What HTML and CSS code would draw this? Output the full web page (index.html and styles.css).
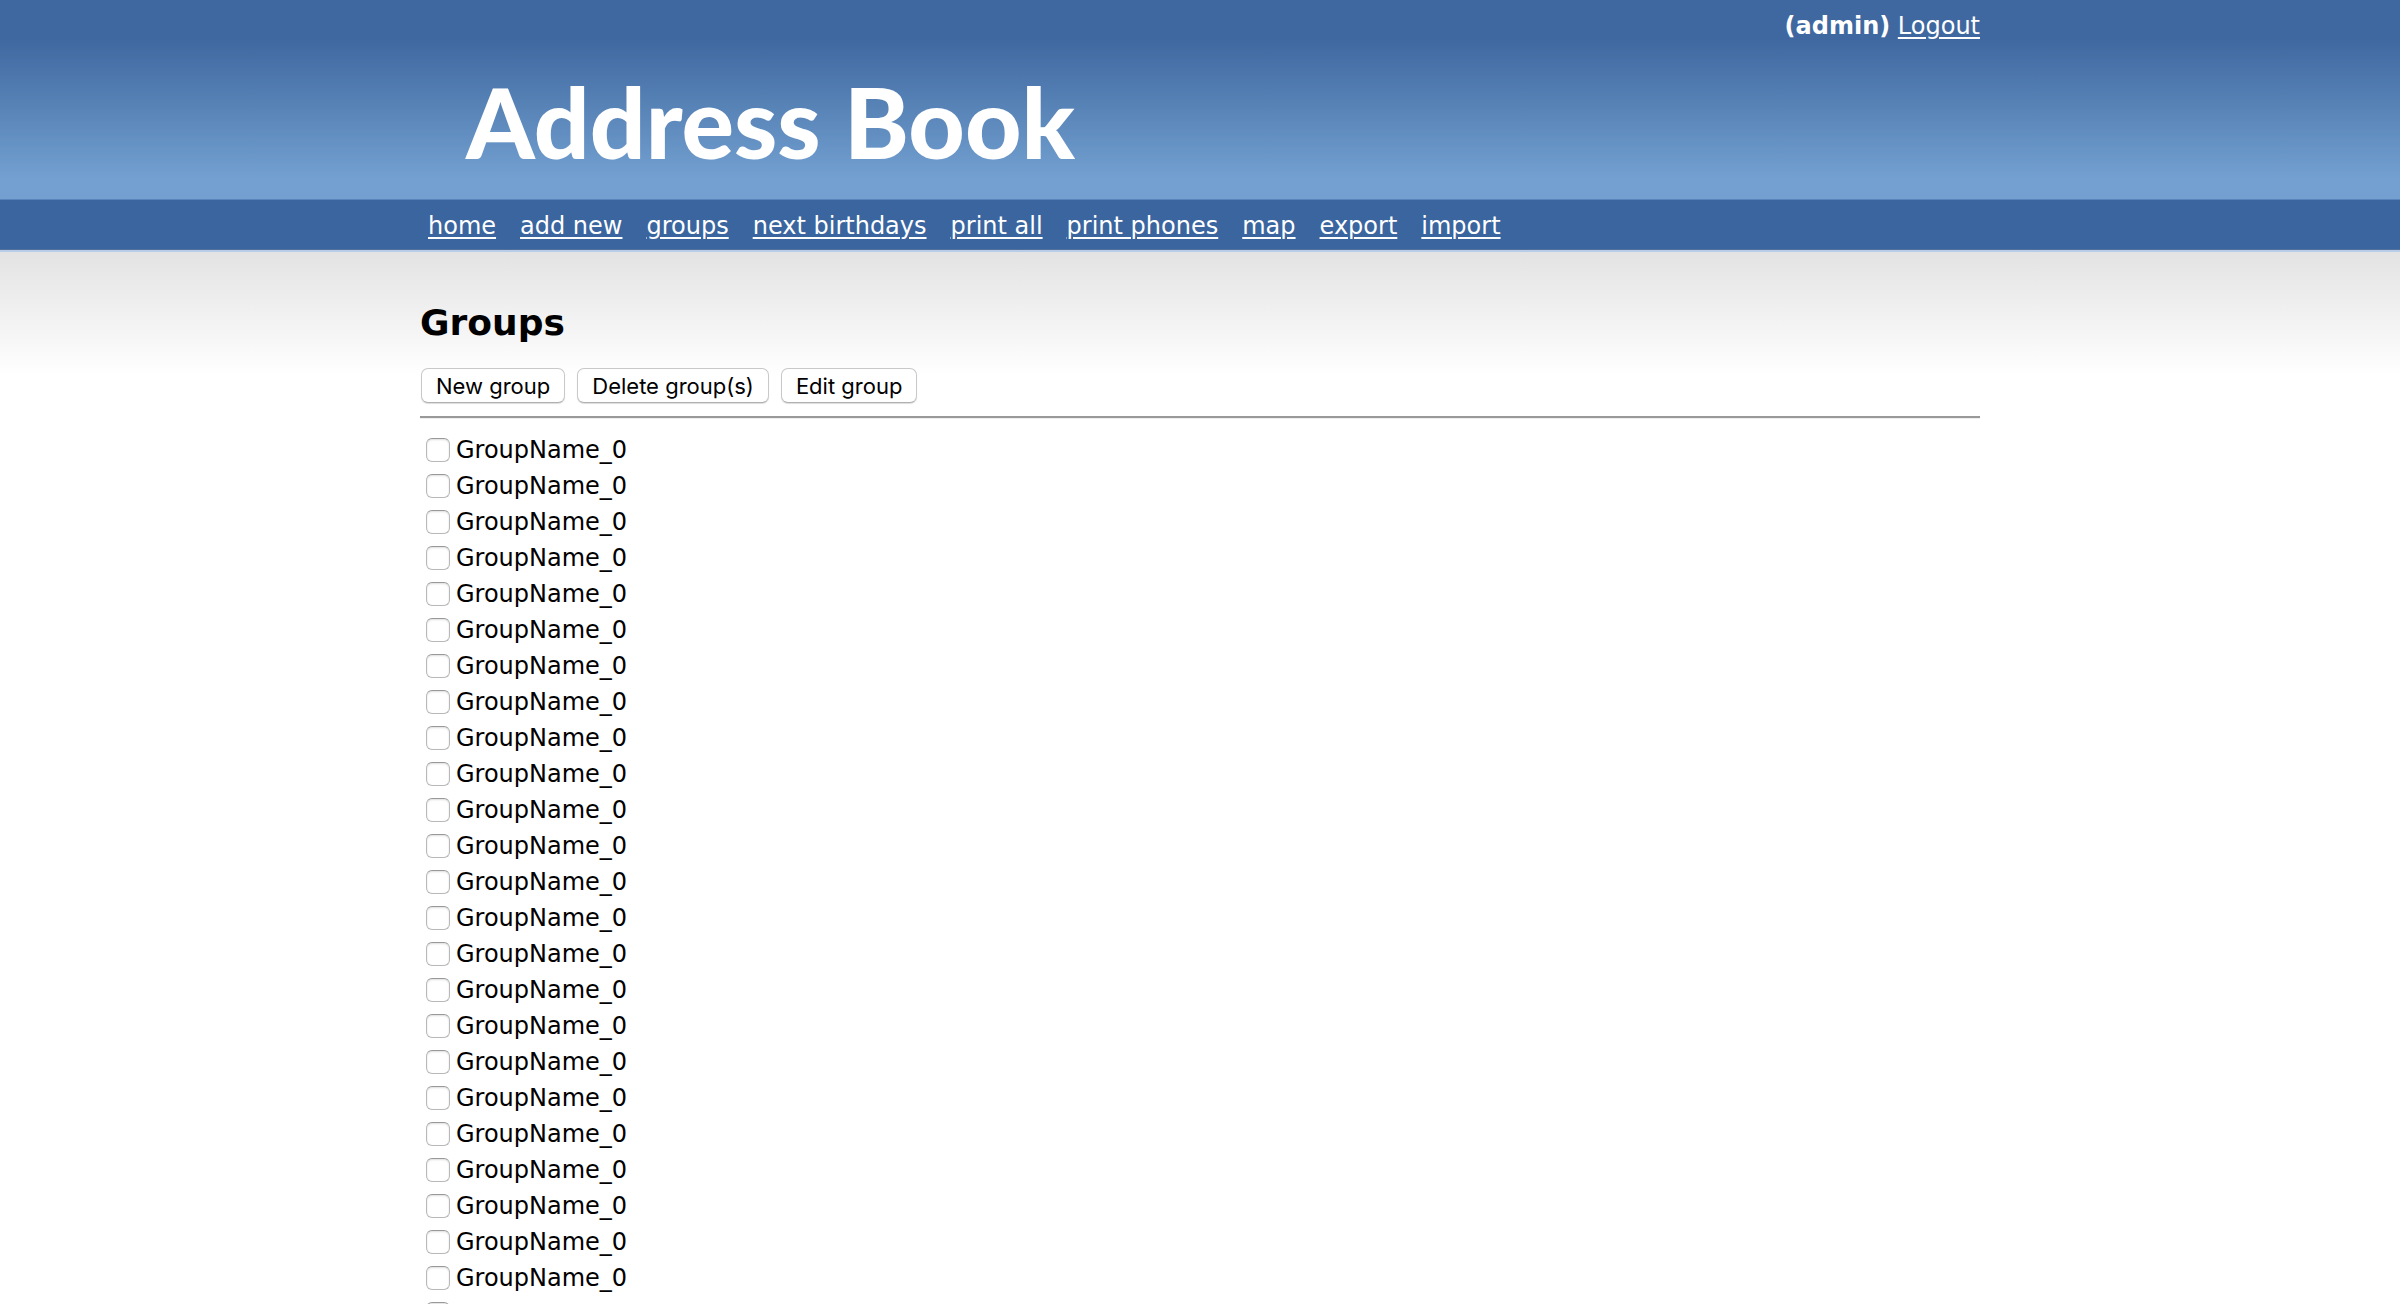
FILE: index.html
```html
<!DOCTYPE html>
<html lang="en">
<head>
<meta charset="utf-8">
<title>Address book</title>
<link rel="stylesheet" href="styles.css">
</head>
<body>
<header class="banner">
  <div class="container banner-inner">
    <div class="account"><b>(admin)</b> <a href="#">Logout</a></div>
    <div class="logo">Address Book</div>
  </div>
</header>
<nav class="nav">
  <ul class="container nav-list">
    <li><a href="#">home</a></li>
    <li><a href="#">add new</a></li>
    <li><a href="#">groups</a></li>
    <li><a href="#">next birthdays</a></li>
    <li><a href="#">print all</a></li>
    <li><a href="#">print phones</a></li>
    <li><a href="#">map</a></li>
    <li><a href="#">export</a></li>
    <li><a href="#">import</a></li>
  </ul>
</nav>
<main class="content">
  <form class="container">
    <h1 class="title">Groups</h1>
    <div class="actions">
      <button type="button">New group</button>
      <button type="button">Delete group(s)</button>
      <button type="button">Edit group</button>
    </div>
    <hr class="rule">
    <ul class="groups">
      <li><label class="group"><input type="checkbox">GroupName_0</label></li>
      <li><label class="group"><input type="checkbox">GroupName_0</label></li>
      <li><label class="group"><input type="checkbox">GroupName_0</label></li>
      <li><label class="group"><input type="checkbox">GroupName_0</label></li>
      <li><label class="group"><input type="checkbox">GroupName_0</label></li>
      <li><label class="group"><input type="checkbox">GroupName_0</label></li>
      <li><label class="group"><input type="checkbox">GroupName_0</label></li>
      <li><label class="group"><input type="checkbox">GroupName_0</label></li>
      <li><label class="group"><input type="checkbox">GroupName_0</label></li>
      <li><label class="group"><input type="checkbox">GroupName_0</label></li>
      <li><label class="group"><input type="checkbox">GroupName_0</label></li>
      <li><label class="group"><input type="checkbox">GroupName_0</label></li>
      <li><label class="group"><input type="checkbox">GroupName_0</label></li>
      <li><label class="group"><input type="checkbox">GroupName_0</label></li>
      <li><label class="group"><input type="checkbox">GroupName_0</label></li>
      <li><label class="group"><input type="checkbox">GroupName_0</label></li>
      <li><label class="group"><input type="checkbox">GroupName_0</label></li>
      <li><label class="group"><input type="checkbox">GroupName_0</label></li>
      <li><label class="group"><input type="checkbox">GroupName_0</label></li>
      <li><label class="group"><input type="checkbox">GroupName_0</label></li>
      <li><label class="group"><input type="checkbox">GroupName_0</label></li>
      <li><label class="group"><input type="checkbox">GroupName_0</label></li>
      <li><label class="group"><input type="checkbox">GroupName_0</label></li>
      <li><label class="group"><input type="checkbox">GroupName_0</label></li>
      <li><label class="group"><input type="checkbox">GroupName_0</label></li>
    </ul>
  </form>
</main>
</body>
</html>
```
FILE: styles.css
```css
* { box-sizing: border-box; }

body {
  margin: 0;
  background: #fff;
  color: #000;
  font: 24px/36px Verdana, "DejaVu Sans", sans-serif;
}

ul { margin: 0; padding: 0; list-style: none; }

.container {
  width: 100%;
  max-width: 1560px;
  margin: 0 auto;
}

.banner {
  color: #fff;
  background: linear-gradient(#3f68a0 20%, #5c88bb 60%, #73a0d1 90%);
  border-bottom: 1px solid #5684ba;
}

.banner a, .nav a {
  color: #fff;
  text-decoration-thickness: 2px;
  text-underline-offset: 3px;
}

.banner-inner { padding: 8px 0; }

.account { text-align: right; }

.logo {
  padding: 8px 0 0 46px;
  font: 900 98px/139px Lato, sans-serif;
}

.nav {
  background: #3a659f;
  border-bottom: 1px solid #50709b;
}

.nav-list {
  display: flex;
  flex-wrap: wrap;
  gap: 0 24px;
  padding: 8px 8px 5px;
}

.content {
  padding-top: 49px;
  border-top: 2px solid #b9cde9;
  background: linear-gradient(#e3e3e3, #fff 124px);
}

.title {
  margin: 0;
  font-size: 36px;
  line-height: 44px;
}

.actions {
  display: flex;
  gap: 12px;
  margin-top: 23px;
  padding-left: 1px;
}

.actions button {
  height: 35px;
  padding: 0 14px;
  border: 1px solid #c9c9c9;
  border-bottom-color: #b0b0b0;
  border-radius: 7px;
  background: #fff;
  box-shadow: 0 1px 1px #ddd;
  color: #000;
  font: 22px/32px Inter, sans-serif;
}

.rule {
  height: 3px;
  margin: 13px 0;
  border: 0;
  border-top: 2px solid #999;
  border-bottom: 1px solid #eee;
}

.group {
  display: flex;
  align-items: center;
  gap: 6px;
  padding-left: 6px;
}

.group input {
  appearance: none;
  width: 24px;
  height: 24px;
  margin: 0;
  border: 1px solid #b8b8b8;
  border-top-color: #999;
  border-radius: 6px;
  background: #fff;
  box-shadow: inset 0 1px 2px #ddd;
}

.group input:checked { background: #3a659f; }
```
